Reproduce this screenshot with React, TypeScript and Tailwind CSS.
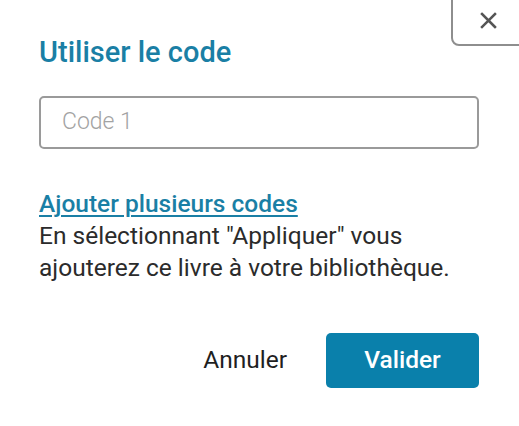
import React from "react";

export default function App() {
  return (
    <div
      className="relative w-[519px] h-[426px] overflow-hidden bg-white px-[39px] pt-[34px]"
      style={{ fontFamily: "Roboto, 'Noto Sans', sans-serif" }}
    >
      <button className="absolute left-[451px] top-[-12px] w-[90px] h-[58px] border-2 border-[#8e8e8e] rounded-[8px] bg-white">
        <svg
          className="absolute left-[27px] top-[22px]"
          width="17"
          height="17"
          viewBox="0 0 17 17"
          fill="none"
          stroke="#555555"
          strokeWidth="2.5"
          strokeLinecap="square"
        >
          <path d="M2 2 L15 15 M15 2 L2 15" />
        </svg>
      </button>

      <h1 className="text-[29px] leading-[36px] font-medium text-[#1a7fa5]">Utiliser le code</h1>

      <div className="mt-[26px] h-[53px] w-[440px] rounded-[5px] border-2 border-[#9a9a9a] flex items-center pl-[21px]">
        <span className="text-[23px] font-light text-[#a3a3a3]">Code 1</span>
      </div>

      <a className="mt-[39px] block text-[24.5px] leading-[31px] font-medium text-[#1a7fa5] underline underline-offset-[3px] decoration-[2px]">
        Ajouter plusieurs codes
      </a>
      <p className="mt-[1px] text-[24.5px] leading-[32px] text-[#2b2b2b] w-[440px]">
        En sélectionnant "Appliquer" vous ajouterez ce livre à votre bibliothèque.
      </p>

      <div className="mt-[49px] flex items-center justify-end gap-[39px] w-[440px]">
        <span className="text-[24.5px] text-[#1f1f1f]">Annuler</span>
        <button className="h-[55px] w-[153px] rounded-[5px] bg-[#0a80ab] text-white text-[24.5px] font-medium">
          Valider
        </button>
      </div>
    </div>
  );
}
